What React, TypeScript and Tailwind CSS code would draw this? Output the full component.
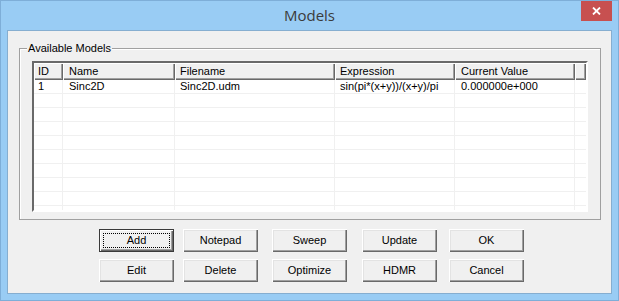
import React from 'react';

const ui = "font-['Liberation_Sans',Arial,sans-serif] text-[11px] text-black";

const columns = [
  { title: 'ID', w: 'w-[29px]', pad: 'pl-[4px]' },
  { title: 'Name', w: 'w-[112px]', pad: 'pl-[6px]' },
  { title: 'Filename', w: 'w-[160px]', pad: 'pl-[5px]' },
  { title: 'Expression', w: 'w-[120px]', pad: 'pl-[5px]' },
  { title: 'Current Value', w: 'w-[120px]', pad: 'pl-[6px]' },
];

const rows = [['1', 'Sinc2D', 'Sinc2D.udm', 'sin(pi*(x+y))/(x+y)/pi', '0.000000e+000']];

function WinButton({ label, isDefault, className = '' }: { label: string; isDefault?: boolean; className?: string }) {
  return (
    <button
      className={`relative h-[23px] w-[75px] bg-[#f0f0f0] ${ui} leading-none ${
        isDefault
          ? 'border border-[#3a3a3a] shadow-[inset_1px_1px_#fff,inset_-1px_-1px_#696969,inset_-2px_-2px_#a0a0a0]'
          : 'shadow-[inset_1px_1px_#fff,inset_-1px_-1px_#696969,inset_-2px_-2px_#a0a0a0,inset_2px_2px_#e3e3e3]'
      } ${className}`}
    >
      {isDefault && <span className="absolute inset-[3px] border border-dotted border-black" />}
      <span className="relative">{label}</span>
    </button>
  );
}

export default function App() {
  const blank = Array.from({ length: 9 });
  return (
    <div className="relative h-[301px] w-[619px] overflow-hidden border border-[#7eaed8] bg-[#99ccf4]">
      {/* Title bar */}
      <div className="flex h-[29px] items-center justify-center">
        <span className="font-['Open_Sans',sans-serif] text-[15px] text-[#3b3b3b]">Models</span>
      </div>
      <button className="absolute right-[6px] top-0 flex h-[20px] w-[31px] items-center justify-center bg-[#c75050]">
        <svg width="9" height="8" viewBox="0 0 9 8">
          <path d="M1 0.5 L8 7.5 M8 0.5 L1 7.5" stroke="#fff" strokeWidth="1.8" />
        </svg>
      </button>

      {/* Client area */}
      <div className="ml-[6px] h-[264px] w-[605px] border border-[#86aed0] bg-[#f0f0f0]">
        {/* Group box */}
        <div className="ml-[11px] mt-[17px] h-[172px] w-[582px] border border-[#a0a0a0] shadow-[inset_1px_1px_#fff]">
          <div className="ml-[7px] -mt-[8px] flex">
            <span className={`${ui} bg-[#f0f0f0] px-[1px] leading-[14px]`}>Available Models</span>
          </div>
          {/* List view */}
          <div className="ml-[12px] mt-[6px] h-[151px] w-[556px] overflow-hidden border-2 border-b-[#fff] border-l-[#696969] border-r-[#fff] border-t-[#696969] bg-white">
            <div className="flex h-[17px] bg-[#f0f0f0]">
              {columns.map((c) => (
                <div
                  key={c.title}
                  className={`${c.w} ${c.pad} ${ui} flex items-center shadow-[inset_1px_1px_#fff,inset_-1px_-1px_#696969,inset_-2px_-2px_#a0a0a0]`}
                >
                  {c.title}
                </div>
              ))}
              <div className="flex-1 shadow-[inset_1px_1px_#fff,inset_-1px_-1px_#696969,inset_-2px_-2px_#a0a0a0]" />
            </div>
            {rows.map((r, i) => (
              <div key={i} className="flex h-[14px]">
                {r.map((v, j) => (
                  <div
                    key={j}
                    className={`${columns[j].w} ${columns[j].pad} ${ui} flex items-center whitespace-nowrap border-b border-r border-[#f0f0f0] leading-none`}
                  >
                    {v}
                  </div>
                ))}
                <div className="flex-1 border-b border-[#f0f0f0]" />
              </div>
            ))}
            {blank.map((_, i) => (
              <div key={i} className="flex h-[14px]">
                {columns.map((c) => (
                  <div key={c.title} className={`${c.w} border-b border-r border-[#f0f0f0]`} />
                ))}
                <div className="flex-1 border-b border-[#f0f0f0]" />
              </div>
            ))}
          </div>
        </div>

        {/* Buttons */}
        <div className="mt-[9px] flex flex-col gap-[7px]">
          <div className="ml-[91px] flex">
            <WinButton label="Add" isDefault />
            <WinButton label="Notepad" className="ml-[9px]" />
            <WinButton label="Sweep" className="ml-[14px]" />
            <WinButton label="Update" className="ml-[15px]" />
            <WinButton label="OK" className="ml-[12px]" />
          </div>
          <div className="ml-[91px] flex">
            <WinButton label="Edit" />
            <WinButton label="Delete" className="ml-[9px]" />
            <WinButton label="Optimize" className="ml-[14px]" />
            <WinButton label="HDMR" className="ml-[15px]" />
            <WinButton label="Cancel" className="ml-[12px]" />
          </div>
        </div>
      </div>
    </div>
  );
}
